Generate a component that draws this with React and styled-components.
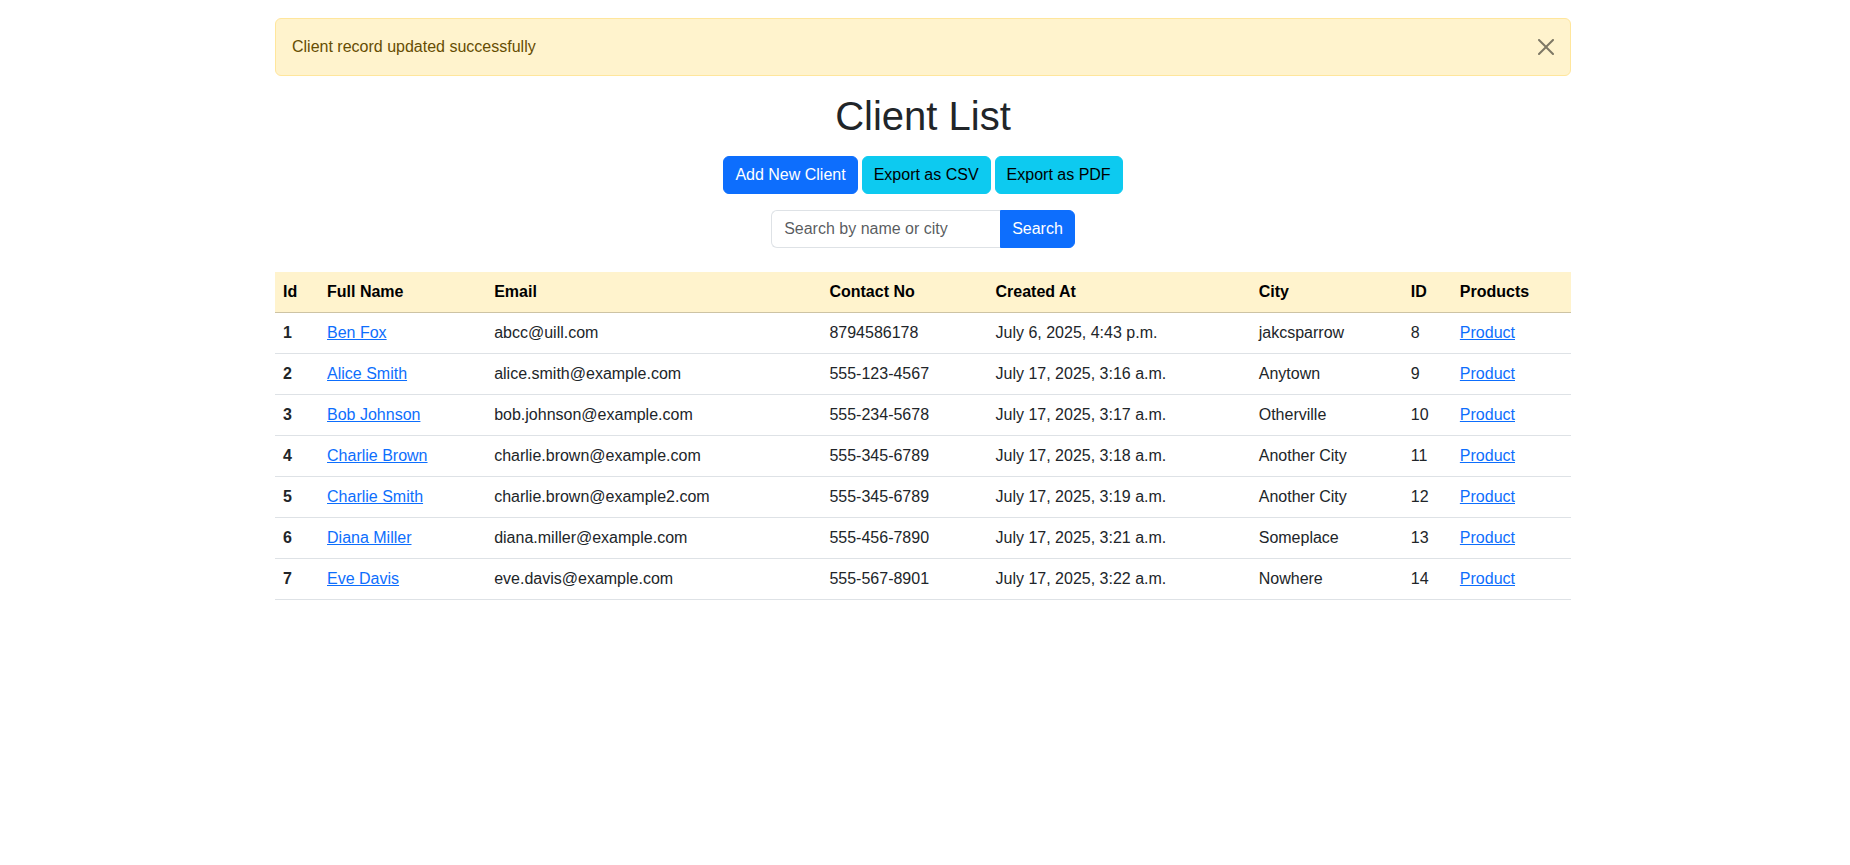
import React from "react";
import styled, { createGlobalStyle } from "styled-components";

const GlobalStyle = createGlobalStyle`
  * { box-sizing: border-box; }
  body {
    margin: 0;
    padding-right: 4px;
    background: #fff;
    color: #212529;
    font-family: "Liberation Sans", Arial, sans-serif;
    font-size: 16px;
    line-height: 24px;
  }
`;

const Container = styled.div`
  max-width: 1320px;
  margin: 0 auto;
  padding: 18px 12px 0;
`;

const Alert = styled.div`
  position: relative;
  padding: 16px 48px 16px 16px;
  margin-bottom: 16px;
  background: #fff3cd;
  border: 1px solid #ffe69c;
  border-radius: 6px;
  color: #664d03;
`;

const CloseButton = styled.button`
  position: absolute;
  top: 0;
  right: 0;
  padding: 20px 16px;
  border: 0;
  background: transparent;
  opacity: 0.5;
  line-height: 0;
  cursor: pointer;
  svg {
    width: 16px;
    height: 16px;
    fill: #000;
  }
`;

const Title = styled.h1`
  margin: 0 0 16px;
  text-align: center;
  font-size: 40px;
  font-weight: 400;
  line-height: 48px;
  color: #212529;
`;

const Actions = styled.div`
  display: flex;
  justify-content: center;
  gap: 4px;
  margin-bottom: 16px;
`;

const Button = styled.button`
  font-family: inherit;
  font-size: 16px;
  line-height: 24px;
  padding: 6px 11px;
  border-radius: ${(p) => p.$radius || "6px"};
  border: 1px solid ${(p) => (p.$variant === "info" ? "#0dcaf0" : "#0d6efd")};
  background: ${(p) => (p.$variant === "info" ? "#0dcaf0" : "#0d6efd")};
  color: ${(p) => (p.$variant === "info" ? "#000" : "#fff")};
  cursor: pointer;
`;

const SearchForm = styled.form`
  display: flex;
  justify-content: center;
  margin-bottom: 24px;
`;

const SearchInput = styled.input`
  width: 229px;
  font-family: inherit;
  font-size: 16px;
  line-height: 24px;
  padding: 6px 12px;
  border: 1px solid #dee2e6;
  border-right: 0;
  border-radius: 6px 0 0 6px;
  color: #212529;
  outline: none;
  &::placeholder {
    color: rgba(33, 37, 41, 0.75);
  }
`;

const Table = styled.table`
  width: 100%;
  table-layout: fixed;
  border-collapse: collapse;
  text-align: left;
`;

const HeadCell = styled.th`
  padding: 8px;
  background: #fff3cd;
  color: #000;
  font-weight: 700;
  border-bottom: 1px solid #cdc3a4;
`;

const Cell = styled.td`
  padding: 8px;
  border-bottom: 1px solid #dee2e6;
  font-weight: ${(p) => (p.$bold ? 700 : 400)};
  white-space: nowrap;
`;

const Link = styled.a`
  color: #0d6efd;
  text-decoration: underline;
`;

const columns = [
  ["Id", 44],
  ["Full Name", 167],
  ["Email", 335],
  ["Contact No", 166],
  ["Created At", 263],
  ["City", 152],
  ["ID", 49],
  ["Products", 119],
];

const clients = [
  ["Ben Fox", "abcc@uill.com", "8794586178", "July 6, 2025, 4:43 p.m.", "jakcsparrow", 8],
  ["Alice Smith", "alice.smith@example.com", "555-123-4567", "July 17, 2025, 3:16 a.m.", "Anytown", 9],
  ["Bob Johnson", "bob.johnson@example.com", "555-234-5678", "July 17, 2025, 3:17 a.m.", "Otherville", 10],
  ["Charlie Brown", "charlie.brown@example.com", "555-345-6789", "July 17, 2025, 3:18 a.m.", "Another City", 11],
  ["Charlie Smith", "charlie.brown@example2.com", "555-345-6789", "July 17, 2025, 3:19 a.m.", "Another City", 12],
  ["Diana Miller", "diana.miller@example.com", "555-456-7890", "July 17, 2025, 3:21 a.m.", "Someplace", 13],
  ["Eve Davis", "eve.davis@example.com", "555-567-8901", "July 17, 2025, 3:22 a.m.", "Nowhere", 14],
];

const CloseIcon = () => (
  <svg viewBox="0 0 16 16">
    <path d="M.293.293a1 1 0 0 1 1.414 0L8 6.586 14.293.293a1 1 0 1 1 1.414 1.414L9.414 8l6.293 6.293a1 1 0 0 1-1.414 1.414L8 9.414l-6.293 6.293a1 1 0 0 1-1.414-1.414L6.586 8 .293 1.707a1 1 0 0 1 0-1.414z" />
  </svg>
);

const App = () => {
  return (
    <>
      <GlobalStyle />
      <Container>
        <Alert role="alert">
          Client record updated successfully
          <CloseButton type="button" aria-label="Close">
            <CloseIcon />
          </CloseButton>
        </Alert>
        <Title>Client List</Title>
        <Actions>
          <Button>Add New Client</Button>
          <Button $variant="info">Export as CSV</Button>
          <Button $variant="info">Export as PDF</Button>
        </Actions>
        <SearchForm onSubmit={(e) => e.preventDefault()}>
          <SearchInput type="text" placeholder="Search by name or city" />
          <Button type="submit" $radius="0 6px 6px 0">
            Search
          </Button>
        </SearchForm>
        <Table>
          <colgroup>
            {columns.map(([name, width]) => (
              <col key={name} style={{ width }} />
            ))}
          </colgroup>
          <thead>
            <tr>
              {columns.map(([name]) => (
                <HeadCell key={name}>{name}</HeadCell>
              ))}
            </tr>
          </thead>
          <tbody>
            {clients.map(([name, email, phone, created, city, id], i) => (
              <tr key={id}>
                <Cell $bold>{i + 1}</Cell>
                <Cell>
                  <Link href="#">{name}</Link>
                </Cell>
                <Cell>{email}</Cell>
                <Cell>{phone}</Cell>
                <Cell>{created}</Cell>
                <Cell>{city}</Cell>
                <Cell>{id}</Cell>
                <Cell>
                  <Link href="#">Product</Link>
                </Cell>
              </tr>
            ))}
          </tbody>
        </Table>
      </Container>
    </>
  );
};

export default App;
